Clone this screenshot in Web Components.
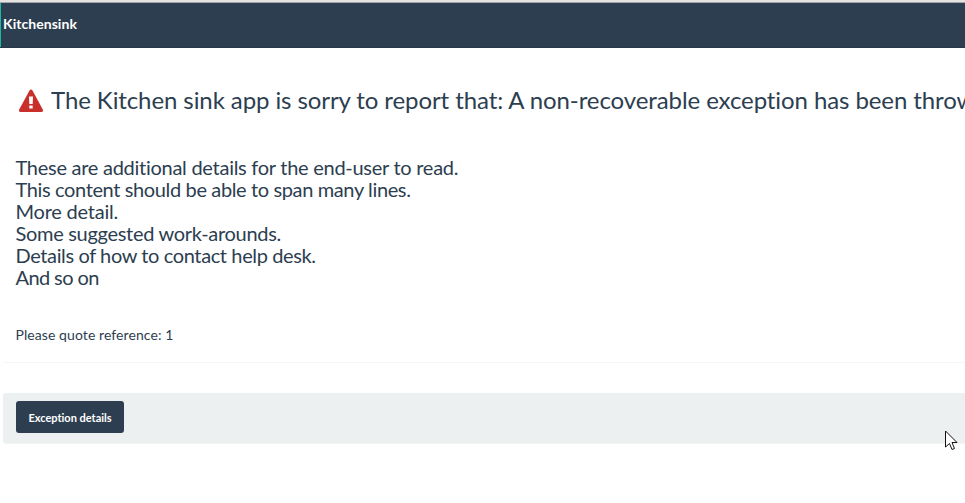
<!DOCTYPE html>
<html lang="en"><head><meta charset="utf-8"><title>Kitchensink</title>
<style>html,body{margin:0;height:100%;overflow:hidden;background:#fff}body{font-family:Lato,sans-serif;color:#2c3e50;font-variant-ligatures:none}</style></head><body>
<error-page></error-page>
<script>
const define=(name,html)=>customElements.define(name,class extends HTMLElement{constructor(){super();this.attachShadow({mode:'open'}).innerHTML=html}});
define('nav-bar',`<style>:host{display:block;height:48px;background:#e3e3e3}div{height:1px;padding-top:2px}div::after{content:"";display:block;height:1px;background:#a5a5a5}nav{box-sizing:border-box;height:45px;padding:2px 0 0 3px;background:#2c3e50;border-bottom:1px solid #27384b;box-shadow:inset 1px 0 #18bc9c;color:#fff;font-size:14px;line-height:38px;font-weight:700;letter-spacing:.05px}</style><div></div><nav><slot></slot></nav>`);
define('warning-icon',`<style>:host{display:block;width:24px;height:24px}svg{display:block}</style><svg width="24" height="24" viewBox="0 0 24 24"><path fill="#c9302c" fill-rule="evenodd" d="M12 .5c.6 0 1.200.3 1.500.9l10.300 19c.7 1.200-.2 2.600-1.500 2.600H1.700c-1.300 0-2.200-1.400-1.500-2.600l10.300-19C10.800.8 11.400.5 12 .5ZM10 7.500l.3 7.500h3.400L14 7.500ZM10.300 16.500v3h3.400v-3Z"/></svg>`);
define('error-heading',`<style>:host{display:flex;gap:8px;align-items:center;padding:0 19px;height:30px;white-space:nowrap;font-size:24px;line-height:30px;letter-spacing:-.09px}span{flex:none;margin-top:-2px}warning-icon{flex:none}</style><warning-icon></warning-icon><span><slot></slot></span>`);
define('error-details',`<style>:host{display:block;margin:40px 0 0 15.500px;font-size:20px;line-height:22px}</style><slot></slot>`);
define('detail-line',`<style>:host{display:block;letter-spacing:var(--tracking,-.3px)}</style><slot></slot>`);
define('ticket-reference',`<style>:host{display:block;margin:37px 0 0 15.500px;font-size:14px;line-height:20px;letter-spacing:.08px}</style><slot></slot>`);
define('action-button',`<style>:host{display:block}button{display:block;width:108px;height:32px;padding:1px 0 0;border:0;border-radius:3px;background:#2c3e50;color:#fff;font:700 11px/31px Lato,sans-serif;font-variant-ligatures:none}</style><button><slot></slot></button>`);
define('action-panel',`<style>:host{display:flex;box-sizing:border-box;margin:30px 0 0 3px;height:50px;padding:8px 13px;background:#ecf0f1;border-radius:3px 0 0 3px;box-shadow:0 1px 1px #0000000d}</style><slot></slot>`);
define('mouse-pointer',`<style>:host{position:absolute;left:945px;top:430px;width:13px;height:21px}svg{display:block}</style><svg width="13" height="21"><path d="M.5 1v16l4-3.500 2.500 6 2.500-1-2.500-6h5Z" fill="#fff" stroke="#111"/></svg>`);
define('error-page',`<style>:host{display:block}hr{margin:17px 0 0 3px;border:0;height:1px;background:#f5f5f5}error-heading{margin-top:38px}</style><nav-bar>Kitchensink</nav-bar><error-heading>The Kitchen sink app is sorry to report that: A non-recoverable exception has been thrown</error-heading><error-details><detail-line style="--tracking:-.27px">These are additional details for the end-user to read.</detail-line><detail-line style="--tracking:-.37px">This content should be able to span many lines.</detail-line><detail-line style="--tracking:-.22px">More detail.</detail-line><detail-line>Some suggested work-arounds.</detail-line><detail-line style="--tracking:-.385px">Details of how to contact help desk.</detail-line><detail-line style="--tracking:-.6px">And so on</detail-line></error-details><ticket-reference>Please quote reference: 1</ticket-reference><hr><action-panel><action-button>Exception details</action-button></action-panel><mouse-pointer></mouse-pointer>`);
</script></body></html>
